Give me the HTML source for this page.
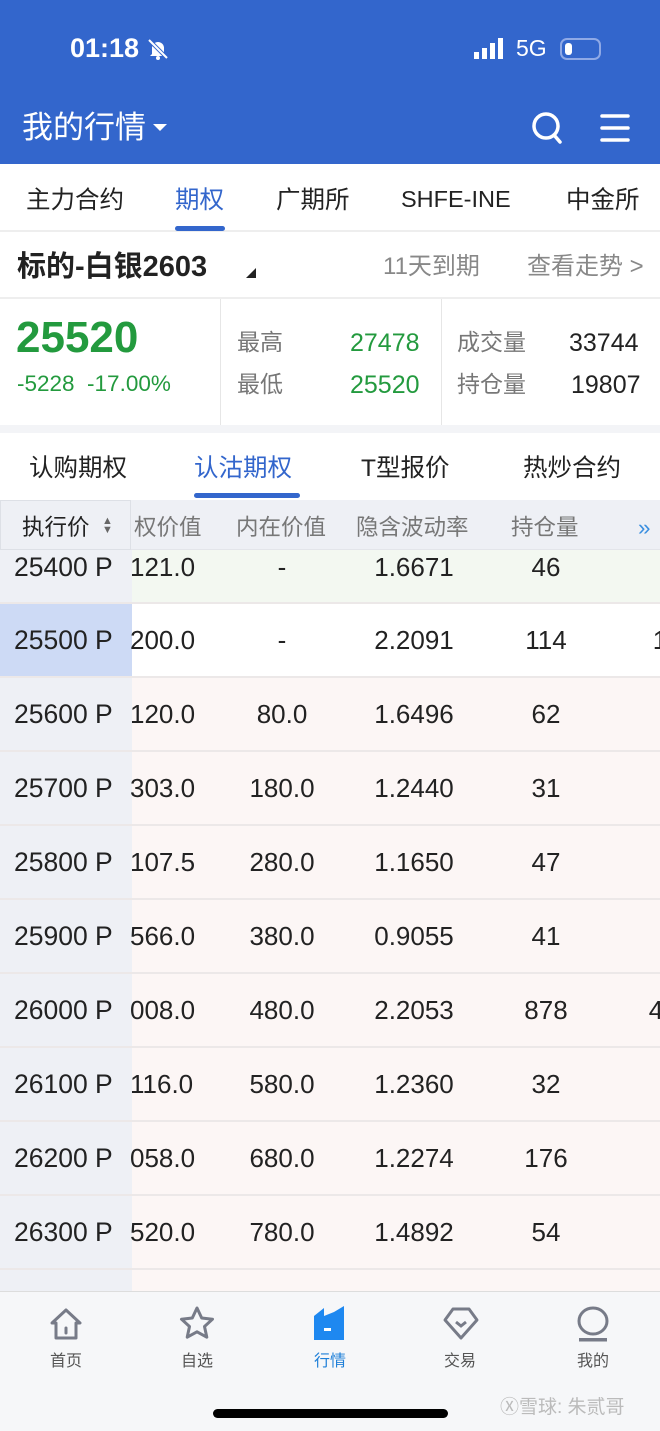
<!DOCTYPE html>
<html><head><meta charset="utf-8"><style>
*{margin:0;padding:0;box-sizing:border-box}
body{width:660px;height:1431px;overflow:hidden;background:#fff;font-family:"Liberation Sans","Noto Sans CJK SC",sans-serif;color:#222;position:relative}
.a{position:absolute;white-space:nowrap;line-height:1.2}
.top{left:0;top:0;width:660px;height:164px;background:#3366cc}
.w{color:#fff}
.row{position:absolute;left:0;width:660px;height:74px;border-bottom:2px solid #ece8e8;background:#fcf6f5}
.row .s{position:absolute;left:0;top:0;width:132px;height:100%;background:#eef0f5;font-size:26.5px;line-height:72px;padding-left:14px;white-space:nowrap;overflow:hidden}
.row span{position:absolute;font-size:26px;line-height:72px;transform:translateX(-50%)}
.row .c1{left:130px;transform:none;overflow:hidden;width:80px;text-align:left}
.nav{left:0;top:1291px;width:660px;height:140px;background:#f6f7f9;border-top:1px solid #ddd}
.ni{position:absolute;top:1347px;font-size:16px;color:#555;transform:translateX(-50%)}
.t{font-size:24.5px;top:186px}
.h{top:514px;font-size:22.5px;color:#777}
</style></head><body>
<div class="a top"></div>
<div class="a w" style="left:70px;top:32px;font-size:27px;font-weight:bold">01:18</div>
<svg class="a" style="left:146px;top:37px" width="24" height="24" viewBox="0 0 24 24"><path d="M6 17V11a6 6 0 0 1 12 0v6l2 2H4z" fill="#fff"/><circle cx="12" cy="21" r="2" fill="#fff"/><path d="M3 3l18 18" stroke="#3366cc" stroke-width="4"/><path d="M3 3l18 18" stroke="#fff" stroke-width="2"/></svg>
<svg class="a" style="left:474px;top:38px" width="34" height="22"><rect x="0" y="14" width="5" height="7" fill="#fff"/><rect x="8" y="10" width="5" height="11" fill="#fff"/><rect x="16" y="5" width="5" height="16" fill="#fff"/><rect x="24" y="0" width="5" height="21" fill="#fff"/></svg>
<div class="a w" style="left:516px;top:35px;font-size:23px">5G</div>
<div class="a" style="left:560px;top:38px;width:41px;height:22px;border:2px solid #8fa9e6;border-radius:7px"><div style="position:absolute;left:3px;top:3px;width:7px;height:12px;background:#fff;border-radius:3px"></div></div>
<div class="a w" style="left:22px;top:109px;font-size:31px">我的行情</div>
<div class="a" style="left:153px;top:124px;border:7px solid transparent;border-top:7px solid #fff"></div>
<svg class="a" style="left:530px;top:110px" width="36" height="36"><circle cx="16" cy="16" r="12" stroke="#fff" stroke-width="3.5" fill="none"/><path d="M24 25l6 7" stroke="#fff" stroke-width="3.5" stroke-linecap="round"/></svg>
<svg class="a" style="left:600px;top:112px" width="32" height="32"><path d="M2 4h26M2 16h26M2 28h26" stroke="#fff" stroke-width="3.5" stroke-linecap="round"/></svg>
<div class="a" style="left:0;top:164px;width:660px;height:68px;border-bottom:2px solid #eee"></div>
<div class="a t" style="left:26px">主力合约</div>
<div class="a t" style="left:175px;color:#3366cc">期权</div>
<div class="a" style="left:175px;top:226px;width:50px;height:5px;border-radius:3px;background:#3366cc"></div>
<div class="a t" style="left:276px">广期所</div>
<div class="a t" style="left:401px;font-size:23.5px;top:185px">SHFE-INE</div>
<div class="a t" style="left:566px">中金所</div>
<div class="a" style="left:17px;top:250px;font-size:29px;font-weight:bold">标的-白银2603</div>
<div class="a" style="left:246px;top:268px;border:5px solid transparent;border-right:5px solid #222;border-bottom:5px solid #222"></div>
<div class="a" style="left:383px;top:253px;font-size:24px;color:#888">11天到期</div>
<div class="a" style="left:527px;top:253px;font-size:24px;color:#888">查看走势 &gt;</div>
<div class="a" style="left:0;top:297px;width:660px;height:2px;background:#eee"></div>
<div class="a" style="left:220px;top:299px;width:1px;height:126px;background:#e6e6e6"></div>
<div class="a" style="left:441px;top:299px;width:1px;height:126px;background:#e6e6e6"></div>
<div class="a" style="left:16px;top:312px;font-size:44px;font-weight:bold;color:#239a3e">25520</div>
<div class="a" style="left:17px;top:370px;font-size:22.5px;color:#239a3e">-5228&nbsp; -17.00%</div>
<div class="a" style="left:237px;top:329px;font-size:23px;color:#777">最高</div>
<div class="a" style="left:350px;top:328px;font-size:25px;color:#239a3e">27478</div>
<div class="a" style="left:237px;top:371px;font-size:23px;color:#777">最低</div>
<div class="a" style="left:350px;top:370px;font-size:25px;color:#239a3e">25520</div>
<div class="a" style="left:457px;top:329px;font-size:23px;color:#777">成交量</div>
<div class="a" style="left:569px;top:328px;font-size:25px">33744</div>
<div class="a" style="left:457px;top:371px;font-size:23px;color:#777">持仓量</div>
<div class="a" style="left:571px;top:370px;font-size:25px">19807</div>
<div class="a" style="left:0;top:425px;width:660px;height:8px;background:#f3f4f7"></div>
<div class="a" style="left:29px;top:454px;font-size:24.5px">认购期权</div>
<div class="a" style="left:194px;top:454px;font-size:24.5px;color:#3366cc">认沽期权</div>
<div class="a" style="left:194px;top:493px;width:106px;height:5px;border-radius:3px;background:#3366cc"></div>
<div class="a" style="left:361px;top:454px;font-size:24.5px">T型报价</div>
<div class="a" style="left:523px;top:454px;font-size:24.5px">热炒合约</div>
<div class="row" style="top:530px;background:#f3f8f1"><div class="s" style="padding-top:20px;line-height:34px">25400 P</div><span class="c1" style="line-height:74px">121.0</span><span style="left:282px;line-height:74px">-</span><span style="left:414px;line-height:74px">1.6671</span><span style="left:546px;line-height:74px">46</span></div>
<div class="a" style="left:0;top:500px;width:660px;height:50px;background:#eef0f5;border-bottom:1px solid #e3e5ea"></div>
<div class="a" style="left:0;top:500px;width:131px;height:50px;border:1px solid #dde0e6;background:#eef0f5"></div>
<div class="a h" style="left:22px;color:#222">执行价</div>
<div class="a" style="left:102px;top:517px;font-size:11px;color:#666;line-height:9px">▲<br>▼</div>
<div class="a h" style="left:134px">权价值</div>
<div class="a h" style="left:236px">内在价值</div>
<div class="a h" style="left:356px">隐含波动率</div>
<div class="a h" style="left:511px">持仓量</div>
<div class="a h" style="left:638px;color:#3a8fe0">»</div>
<div class="row" style="top:604px;background:#fff"><div class="s" style="background:#cddaf5">25500 P</div><span class="c1">200.0</span><span style="left:282px">-</span><span style="left:414px">2.2091</span><span style="left:546px">114</span><span style="left:660px">1</span></div>
<div class="row" style="top:678px"><div class="s">25600 P</div><span class="c1">120.0</span><span style="left:282px">80.0</span><span style="left:414px">1.6496</span><span style="left:546px">62</span></div>
<div class="row" style="top:752px"><div class="s">25700 P</div><span class="c1">303.0</span><span style="left:282px">180.0</span><span style="left:414px">1.2440</span><span style="left:546px">31</span></div>
<div class="row" style="top:826px"><div class="s">25800 P</div><span class="c1">107.5</span><span style="left:282px">280.0</span><span style="left:414px">1.1650</span><span style="left:546px">47</span></div>
<div class="row" style="top:900px"><div class="s">25900 P</div><span class="c1">566.0</span><span style="left:282px">380.0</span><span style="left:414px">0.9055</span><span style="left:546px">41</span></div>
<div class="row" style="top:974px"><div class="s">26000 P</div><span class="c1">008.0</span><span style="left:282px">480.0</span><span style="left:414px">2.2053</span><span style="left:546px">878</span><span style="left:656px">4</span></div>
<div class="row" style="top:1048px"><div class="s">26100 P</div><span class="c1">116.0</span><span style="left:282px">580.0</span><span style="left:414px">1.2360</span><span style="left:546px">32</span></div>
<div class="row" style="top:1122px"><div class="s">26200 P</div><span class="c1">058.0</span><span style="left:282px">680.0</span><span style="left:414px">1.2274</span><span style="left:546px">176</span></div>
<div class="row" style="top:1196px"><div class="s">26300 P</div><span class="c1">520.0</span><span style="left:282px">780.0</span><span style="left:414px">1.4892</span><span style="left:546px">54</span></div>
<div class="row" style="top:1270px"><div class="s"></div></div>
<div class="a nav"></div>
<svg class="a" style="left:48px;top:1306px" width="36" height="36"><path d="M4 17L18 4l14 13h-4v15H8V17z" fill="none" stroke="#777b88" stroke-width="3" stroke-linejoin="round"/><path d="M18 22v5" stroke="#777b88" stroke-width="3" stroke-linecap="round"/></svg>
<svg class="a" style="left:178px;top:1305px" width="38" height="38"><path d="M19 3l4.7 10 10.8 1.2-8 7.3 2.3 10.7L19 26.8 9.2 32.2l2.3-10.7-8-7.3 10.8-1.2z" fill="none" stroke="#777b88" stroke-width="3" stroke-linejoin="round"/></svg>
<svg class="a" style="left:312px;top:1306px" width="36" height="36"><path d="M2 10l10-8v8l10-4 10-6v34H2z" fill="#1e88f0"/><rect x="12" y="22" width="7" height="3" fill="#fff"/></svg>
<svg class="a" style="left:442px;top:1306px" width="38" height="36"><path d="M11 3h16l8 11-16 18L3 14z" fill="none" stroke="#777b88" stroke-width="3" stroke-linejoin="round"/><path d="M14 16l5 4 5-4" fill="none" stroke="#777b88" stroke-width="3"/></svg>
<svg class="a" style="left:576px;top:1306px" width="34" height="38"><ellipse cx="17" cy="15" rx="14" ry="13" fill="none" stroke="#777b88" stroke-width="3"/><rect x="3" y="32" width="28" height="3.5" fill="#777b88"/></svg>
<div class="ni" style="left:66px">首页</div>
<div class="ni" style="left:197px">自选</div>
<div class="ni" style="left:330px;color:#1e7fd8">行情</div>
<div class="ni" style="left:460px">交易</div>
<div class="ni" style="left:593px">我的</div>
<div class="a" style="left:213px;top:1409px;width:235px;height:9px;border-radius:5px;background:#000"></div>
<div class="a" style="left:500px;top:1397px;font-size:19px;color:#bbb">Ⓧ雪球: 朱贰哥</div>
</body></html>
